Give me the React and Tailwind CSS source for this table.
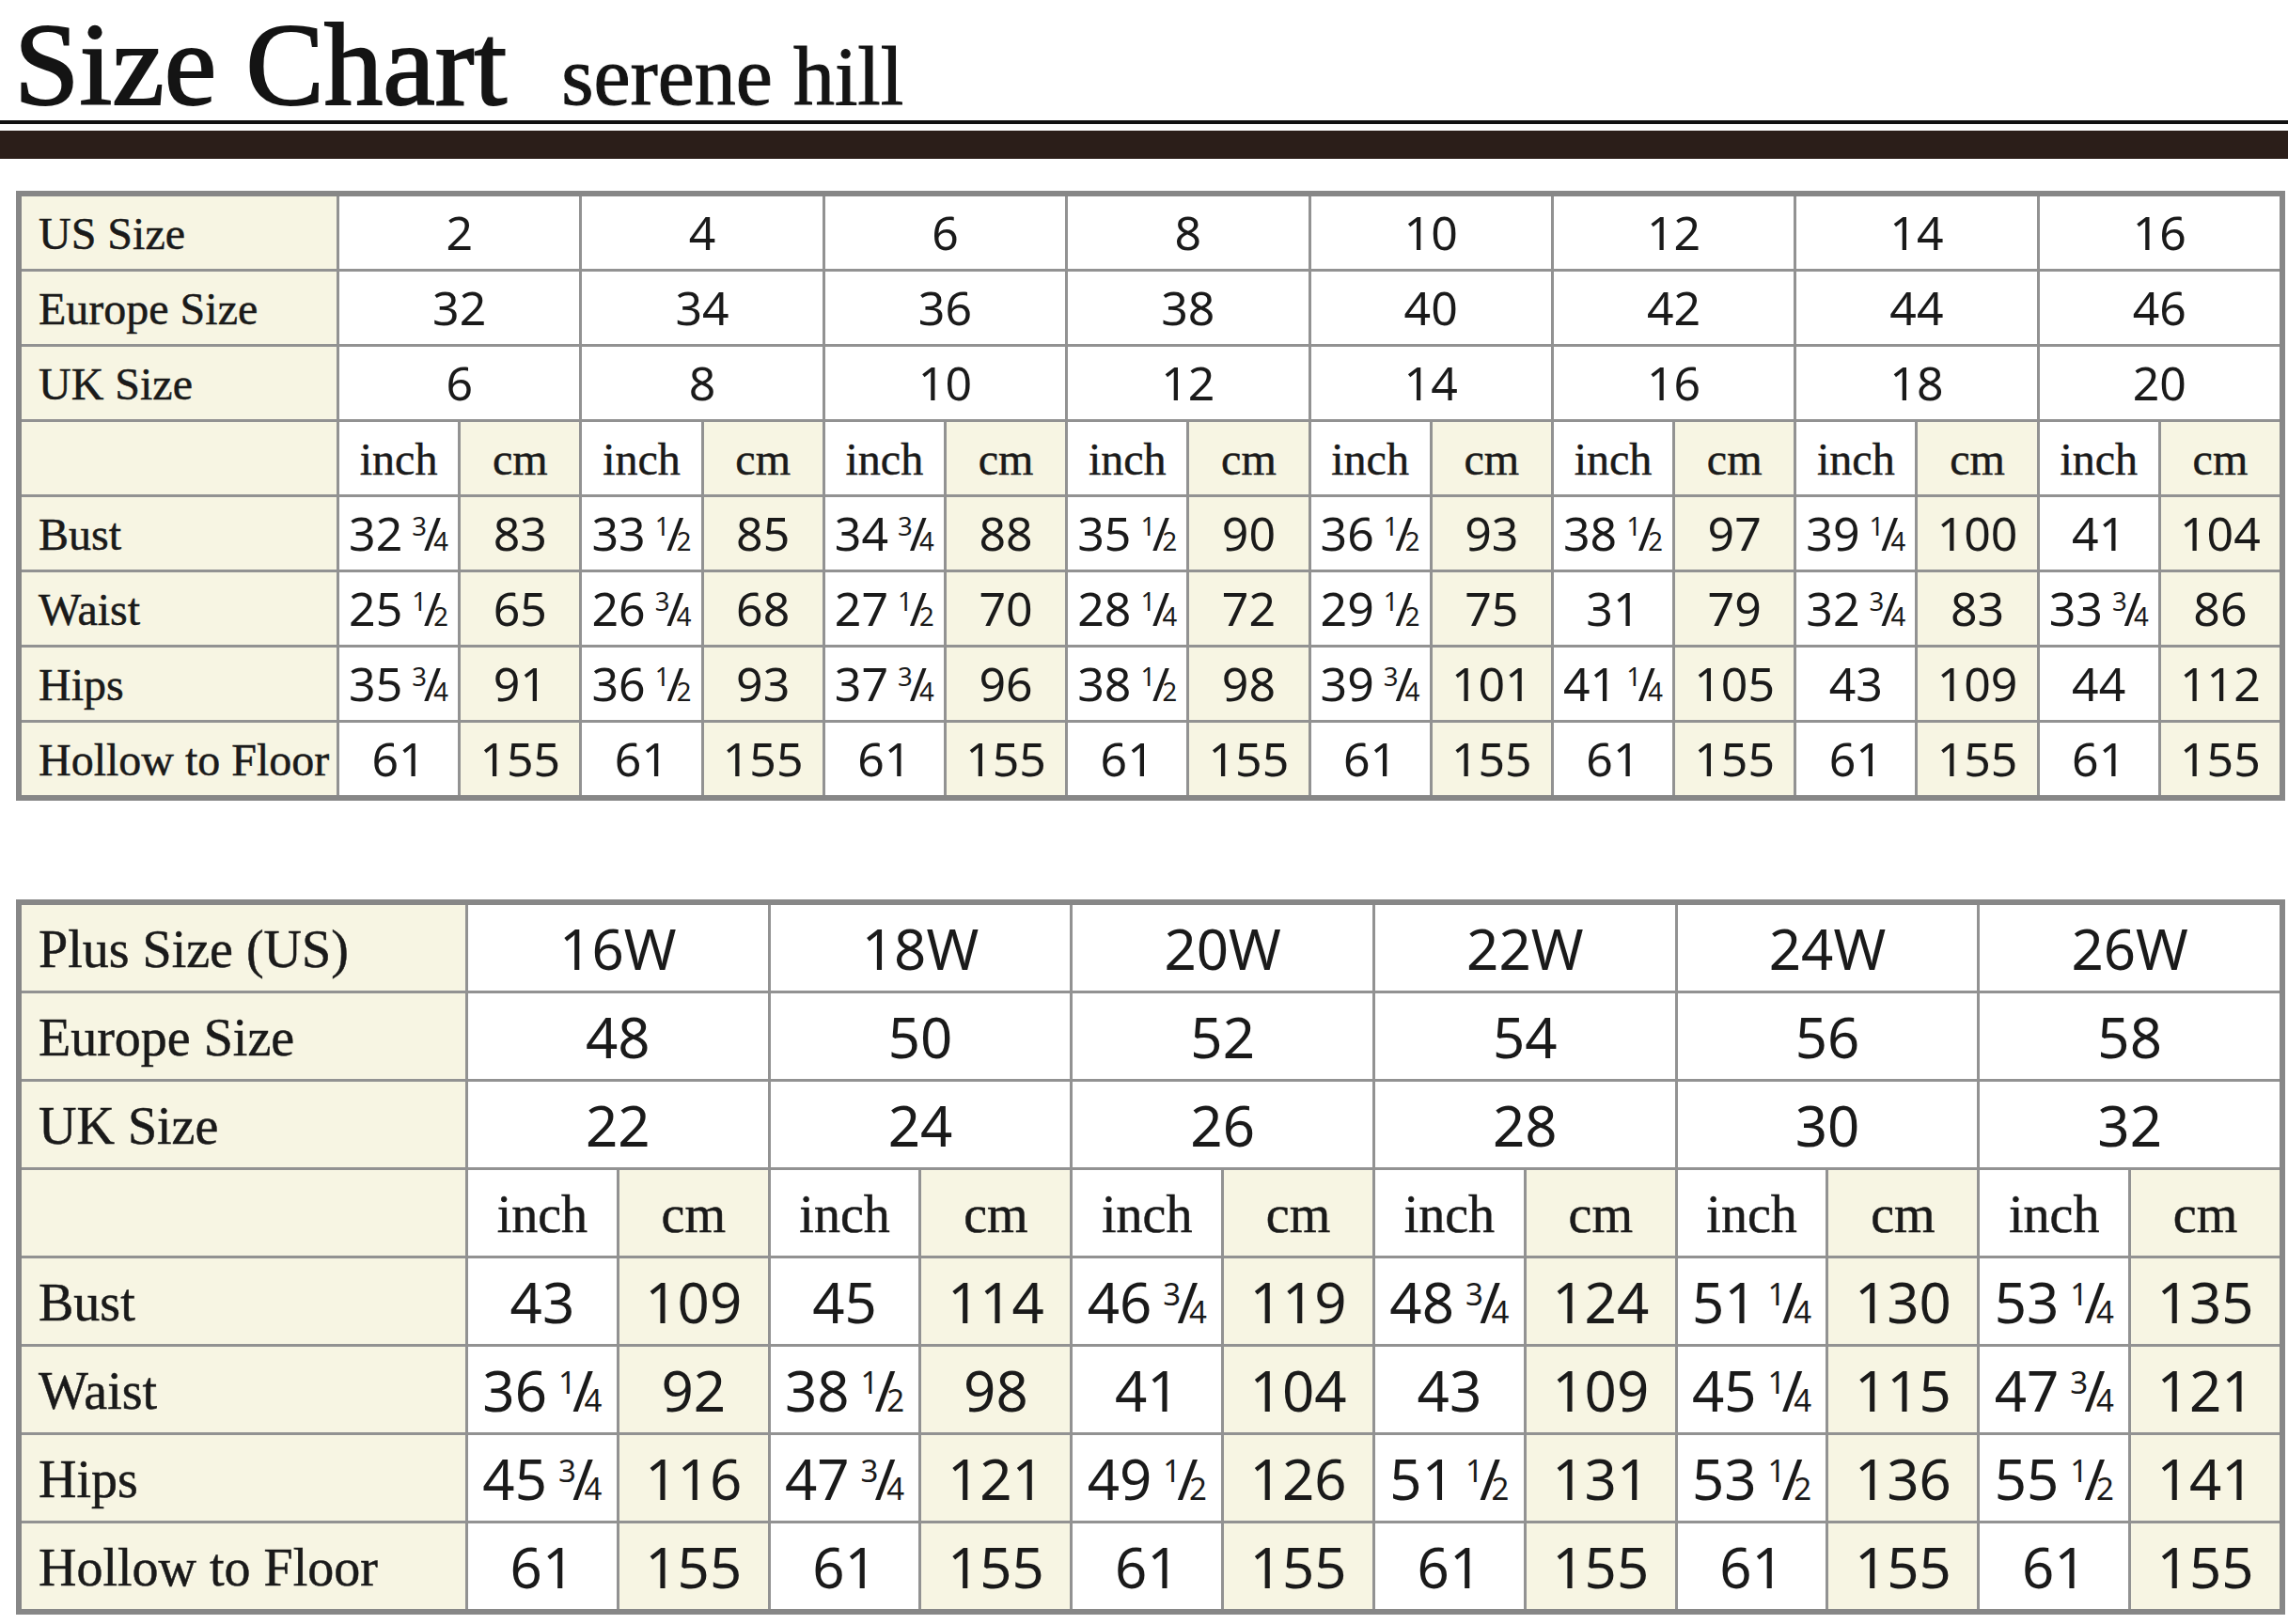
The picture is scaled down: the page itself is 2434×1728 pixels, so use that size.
import React from 'react';

const serif = "font-['Liberation_Serif','Times_New_Roman',serif]";
const sans = "font-['Noto_Sans','Open_Sans',sans-serif]";

const regular = {
  sizes: [
    ['US Size', '2', '4', '6', '8', '10', '12', '14', '16'],
    ['Europe Size', '32', '34', '36', '38', '40', '42', '44', '46'],
    ['UK Size', '6', '8', '10', '12', '14', '16', '18', '20']
  ],
  measures: [
    ['Bust', '32 ¾', '83', '33 ½', '85', '34 ¾', '88', '35 ½', '90', '36 ½', '93', '38 ½', '97', '39 ¼', '100', '41', '104'],
    ['Waist', '25 ½', '65', '26 ¾', '68', '27 ½', '70', '28 ¼', '72', '29 ½', '75', '31', '79', '32 ¾', '83', '33 ¾', '86'],
    ['Hips', '35 ¾', '91', '36 ½', '93', '37 ¾', '96', '38 ½', '98', '39 ¾', '101', '41 ¼', '105', '43', '109', '44', '112'],
    ['Hollow to Floor', '61', '155', '61', '155', '61', '155', '61', '155', '61', '155', '61', '155', '61', '155', '61', '155']
  ]
};

const plus = {
  sizes: [
    ['Plus Size (US)', '16W', '18W', '20W', '22W', '24W', '26W'],
    ['Europe Size', '48', '50', '52', '54', '56', '58'],
    ['UK Size', '22', '24', '26', '28', '30', '32']
  ],
  measures: [
    ['Bust', '43', '109', '45', '114', '46 ¾', '119', '48 ¾', '124', '51 ¼', '130', '53 ¼', '135'],
    ['Waist', '36 ¼', '92', '38 ½', '98', '41', '104', '43', '109', '45 ¼', '115', '47 ¾', '121'],
    ['Hips', '45 ¾', '116', '47 ¾', '121', '49 ½', '126', '51 ½', '131', '53 ½', '136', '55 ½', '141'],
    ['Hollow to Floor', '61', '155', '61', '155', '61', '155', '61', '155', '61', '155', '61', '155']
  ]
};

const fractions = { '¾': ['3', '4'], '½': ['1', '2'], '¼': ['1', '4'] };

// tall fractions like the printed chart: numerator top-aligned, denominator on the baseline
function Value({ text }) {
  const [whole, frac] = text.split(' ');
  if (!frac) return <span>{whole}</span>;
  const [num, den] = fractions[frac];
  return (
    <span className="whitespace-nowrap">
      {whole}
      <span className="ml-[0.2em]">
        <span className="text-[0.55em] align-[0.58em] tracking-[-0.12em]">{num}</span>
        <span className="tracking-[-0.16em]">/</span>
        <span className="text-[0.55em]">{den}</span>
      </span>
    </span>
  );
}

function SizeTable({ data, cols, big }) {
  const gridCls = big
    ? 'grid-cols-[472px_repeat(12,1fr)] grid-rows-[repeat(8,91px)]'
    : 'grid-cols-[335px_repeat(16,1fr)] grid-rows-[repeat(8,77px)]';
  const labelText = big ? 'text-[56px]' : 'text-[48px]';
  const numText = big ? 'text-[60px]' : 'text-[50px]';

  const label = (text) => (
    <div
      className={`flex items-center bg-[#f7f5e3] pl-[18px] pt-[3px] whitespace-nowrap ${serif} ${labelText} [-webkit-text-stroke:0.5px_#1a1a1a]`}
    >
      {text}
    </div>
  );

  return (
    <div className="ml-[17px] w-[2414px] border-[6px] border-[#878787]">
      <div className={`grid ${gridCls} gap-[3px] bg-[#929292] text-[#1a1a1a]`}>
        {data.sizes.map((row) => (
          <React.Fragment key={row[0]}>
            {label(row[0])}
            {row.slice(1).map((v, i) => (
              <div key={i} className={`col-span-2 flex items-center justify-center bg-white ${sans} ${numText}`}>
                {v}
              </div>
            ))}
          </React.Fragment>
        ))}

        {label('')}
        {Array.from({ length: cols }).map((_, i) => (
          <React.Fragment key={i}>
            <div className={`flex items-center justify-center bg-white pt-[3px] ${serif} ${labelText} [-webkit-text-stroke:0.5px_#1a1a1a]`}>
              inch
            </div>
            <div className={`flex items-center justify-center bg-[#f7f5e3] pt-[3px] ${serif} ${labelText} [-webkit-text-stroke:0.5px_#1a1a1a]`}>
              cm
            </div>
          </React.Fragment>
        ))}

        {data.measures.map((row) => (
          <React.Fragment key={row[0]}>
            {label(row[0])}
            {row.slice(1).map((v, i) => (
              <div
                key={i}
                className={`flex items-center justify-center whitespace-nowrap ${sans} ${numText} ${
                  i % 2 === 0 ? 'bg-white' : 'bg-[#f7f5e3]'
                }`}
              >
                <Value text={v} />
              </div>
            ))}
          </React.Fragment>
        ))}
      </div>
    </div>
  );
}

export default function App() {
  return (
    <div className="w-[2434px] h-[1728px] overflow-hidden bg-white">
      {/* header */}
      <div className={`flex items-baseline h-[128px] pt-[7px] pl-[15px] leading-none text-[#141414] ${serif}`}>
        <span className="text-[125px] [-webkit-text-stroke:2px_#141414]">Size Chart</span>
        <span className="ml-[58px] text-[88px] [-webkit-text-stroke:1px_#141414]">serene hill</span>
      </div>
      <div className="h-[4px] bg-[#111]" />
      <div className="h-[7px]" />
      <div className="h-[30px] bg-[#2b1e19]" />

      <div className="mt-[34px]">
        <SizeTable data={regular} cols={8} />
      </div>

      <div className="mt-[105px]">
        <SizeTable data={plus} cols={6} big />
      </div>
    </div>
  );
}
